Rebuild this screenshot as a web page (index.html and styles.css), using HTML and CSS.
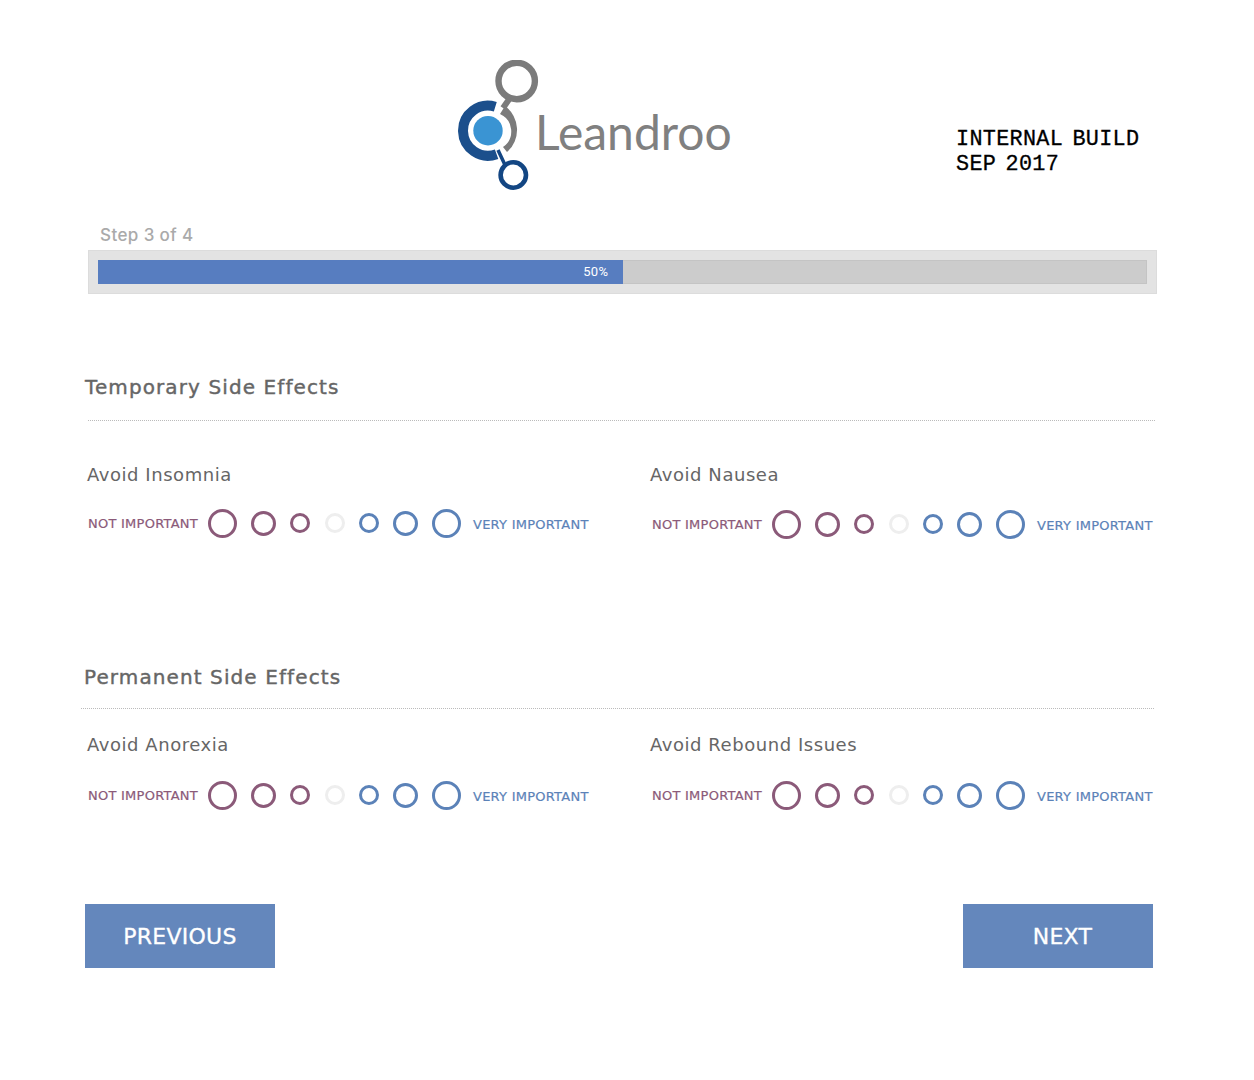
FILE: index.html
```html
<!DOCTYPE html>
<html>
<head>
    <title>Leandroo - Step 3 of 4</title>
    <link rel="stylesheet" href="styles.css">
</head>
<body>
    <div class="masthead">
        <div class="logo">
            <svg class="logo-mark" width="82" height="132" viewBox="458 60 82 132">
                <circle cx="516.7" cy="81" r="18.2" fill="none" stroke="#7b7b7b" stroke-width="6.4"/>
                <path d="M510 98 L503 108" fill="none" stroke="#7b7b7b" stroke-width="6"/>
                <path d="M505 106 A29.5 29.5 0 0 1 507 152 L503 147 A19 19 0 0 0 500 114 Z" fill="#7b7b7b"/>
                <path d="M495.3 106.8 A25 25 0 1 0 496.6 154.2" fill="none" stroke="#1b4f8c" stroke-width="10"/>
                <circle cx="488" cy="130.7" r="14.7" fill="#3a94d3"/>
                <path d="M498 150 L505 165" fill="none" stroke="#134683" stroke-width="3.5"/>
                <circle cx="513.3" cy="175" r="12.7" fill="#fff" stroke="#134683" stroke-width="4.6"/>
            </svg>
            <span class="logo-name">Leandroo</span>
        </div>
        <div class="build-note">INTERNAL BUILD<br>SEP 2017</div>
    </div>

    <div class="step-label">Step 3 of 4</div>
    <div class="progress">
        <div class="progress-track">
            <div class="progress-fill" style="width: 50%">50%</div>
        </div>
    </div>

    <h2 class="section-title first">Temporary Side Effects</h2>
    <div class="divider first"></div>
    <div class="questions first">
        <div class="question">
            <div class="question-name">Avoid Insomnia</div>
            <div class="scale">
                <span class="scale-low">NOT IMPORTANT</span>
                <span class="dot low big"></span><span class="dot low medium"></span><span class="dot low small"></span>
                <span class="dot mid small"></span>
                <span class="dot high small"></span><span class="dot high medium"></span><span class="dot high big"></span>
                <span class="scale-high">VERY IMPORTANT</span>
            </div>
        </div>
        <div class="question">
            <div class="question-name">Avoid Nausea</div>
            <div class="scale right">
                <span class="scale-low">NOT IMPORTANT</span>
                <span class="dot low big"></span><span class="dot low medium"></span><span class="dot low small"></span>
                <span class="dot mid small"></span>
                <span class="dot high small"></span><span class="dot high medium"></span><span class="dot high big"></span>
                <span class="scale-high">VERY IMPORTANT</span>
            </div>
        </div>
    </div>

    <h2 class="section-title second">Permanent Side Effects</h2>
    <div class="divider second"></div>
    <div class="questions second">
        <div class="question">
            <div class="question-name">Avoid Anorexia</div>
            <div class="scale">
                <span class="scale-low">NOT IMPORTANT</span>
                <span class="dot low big"></span><span class="dot low medium"></span><span class="dot low small"></span>
                <span class="dot mid small"></span>
                <span class="dot high small"></span><span class="dot high medium"></span><span class="dot high big"></span>
                <span class="scale-high">VERY IMPORTANT</span>
            </div>
        </div>
        <div class="question">
            <div class="question-name">Avoid Rebound Issues</div>
            <div class="scale">
                <span class="scale-low">NOT IMPORTANT</span>
                <span class="dot low big"></span><span class="dot low medium"></span><span class="dot low small"></span>
                <span class="dot mid small"></span>
                <span class="dot high small"></span><span class="dot high medium"></span><span class="dot high big"></span>
                <span class="scale-high">VERY IMPORTANT</span>
            </div>
        </div>
    </div>

    <div class="buttons">
        <a class="button">PREVIOUS</a>
        <a class="button next">NEXT</a>
    </div>
</body>
</html>
```

FILE: styles.css
```css
body { margin: 0; background: #fff; font-family: "DejaVu Sans", Verdana, sans-serif; color: #666; }

.masthead { display: flex; align-items: flex-start; height: 132px; padding: 60px 0 0 458px; }
.logo { display: flex; width: 498px; }
.logo-mark { display: block; flex: none; }
.logo-name { margin: 42px 0 0 -5px; font-family: Lato, sans-serif; font-weight: 400; font-size: 48px; line-height: 60px; color: #808080; }
.build-note { margin-top: 67px; font-family: "Liberation Mono", monospace; font-size: 21.8px; line-height: 25px; letter-spacing: 0.3px; word-spacing: -4px; color: #000; -webkit-text-stroke: 0.3px #000; }

.step-label { margin: 33px 0 0 100px; font-family: Inter, sans-serif; font-size: 17px; font-weight: 500; line-height: 21px; letter-spacing: 0.4px; color: #aaa; }
.progress { box-sizing: border-box; margin: 4px 0 0 88px; width: 1069px; padding: 9px; background: #e3e3e3; border: 1px solid #dcdcdc; }
.progress-track { height: 24px; background: #ccc; box-shadow: inset 0 0 0 1px #c4c4c4; }
.progress-fill { height: 24px; padding-right: 14px; box-sizing: border-box; background: #577dc0; color: #fff; font-family: Roboto, sans-serif; font-size: 13px; line-height: 24px; letter-spacing: 0.4px; text-align: right; }

.section-title { margin: 0 0 0 85px; font-size: 20px; line-height: 24px; letter-spacing: 1.1px; font-weight: normal; color: #666; -webkit-text-stroke: 0.4px #666; }
.section-title.first { margin-top: 81px; }
.section-title.second { margin: 0 0 0 84px; }

.divider { border-top: 1px dotted #bbb; }
.divider.first { margin: 21px 0 0 88px; width: 1067px; }
.divider.second { margin: 19px 0 0 81px; width: 1073px; }

.questions { display: grid; grid-template-columns: 563px 1fr; padding-left: 87px; }
.questions.first { margin-top: 42px; height: 202px; }
.questions.second { margin-top: 24px; height: 171px; }

.question-name { font-size: 18px; line-height: 24px; letter-spacing: 0.55px; color: #666; }

.scale { display: flex; align-items: center; gap: 14px; margin: 21px 0 0 1px; height: 30px; font-size: 13px; letter-spacing: 0.25px; -webkit-text-stroke: 0.2px; }
.scale.right { margin-top: 22px; }
.questions.second .scale { margin-top: 23px; }
.question + .question .scale { padding-left: 1px; }
.scale-low { width: 106px; color: #8b5a79; white-space: nowrap; }
.scale-high { color: #5b82b8; margin: 2px 0 0 -2px; white-space: nowrap; }

.dot { box-sizing: border-box; border-radius: 50%; border: 3px solid; flex: none; }
.dot.big { width: 29px; height: 29px; }
.dot.medium { width: 25px; height: 25px; }
.dot.small { width: 20px; height: 20px; }
.dot.low { border-color: #8b5a79; }
.dot.mid { border-color: #eee; margin-left: 1px; }
.dot.high { border-color: #5b82b8; }

.buttons { display: flex; justify-content: space-between; margin-left: 85px; width: 1068px; }
.button { width: 190px; height: 64px; background: #6487bc; color: #fff; font-size: 22px; line-height: 66px; letter-spacing: 0.25px; text-align: center; -webkit-text-stroke: 0.3px #fff; }
.button.next { box-sizing: border-box; padding-left: 9px; }
```
